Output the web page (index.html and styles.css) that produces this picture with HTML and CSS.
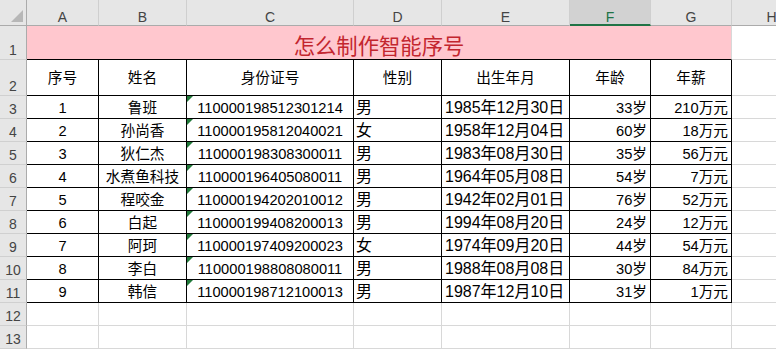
FILE: index.html
```html
<!DOCTYPE html>
<html lang="zh-CN">
<head>
<meta charset="utf-8">
<title>怎么制作智能序号</title>
<link rel="stylesheet" href="styles.css">
</head>
<body>
<div class="sheet">
  <div class="hd corner"></div>
  <div class="hd col">A</div>
  <div class="hd col">B</div>
  <div class="hd col">C</div>
  <div class="hd col">D</div>
  <div class="hd col">E</div>
  <div class="hd col sel">F</div>
  <div class="hd col">G</div>
  <div class="hd col">H</div>

  <div class="hd rn">1</div>
  <div class="cell title">怎么制作智能序号</div>
  <div class="cell"></div>

  <div class="hd rn">2</div>
  <div class="cell t th">序号</div>
  <div class="cell t th">姓名</div>
  <div class="cell t th">身份证号</div>
  <div class="cell t th">性别</div>
  <div class="cell t th">出生年月</div>
  <div class="cell t th">年龄</div>
  <div class="cell t th">年薪</div>
  <div class="cell"></div>

  <div class="hd rn">3</div>
  <div class="cell t ctr">1</div><div class="cell t ctr">鲁班</div><div class="cell t ctr id">110000198512301214</div><div class="cell t sex">男</div><div class="cell t date">1985年12月30日</div><div class="cell t num">33岁</div><div class="cell t num">210万元</div><div class="cell"></div>

  <div class="hd rn">4</div>
  <div class="cell t ctr">2</div><div class="cell t ctr">孙尚香</div><div class="cell t ctr id">110000195812040021</div><div class="cell t sex">女</div><div class="cell t date">1958年12月04日</div><div class="cell t num">60岁</div><div class="cell t num">18万元</div><div class="cell"></div>

  <div class="hd rn">5</div>
  <div class="cell t ctr">3</div><div class="cell t ctr">狄仁杰</div><div class="cell t ctr id">110000198308300011</div><div class="cell t sex">男</div><div class="cell t date">1983年08月30日</div><div class="cell t num">35岁</div><div class="cell t num">56万元</div><div class="cell"></div>

  <div class="hd rn">6</div>
  <div class="cell t ctr">4</div><div class="cell t ctr">水煮鱼科技</div><div class="cell t ctr id">110000196405080011</div><div class="cell t sex">男</div><div class="cell t date">1964年05月08日</div><div class="cell t num">54岁</div><div class="cell t num">7万元</div><div class="cell"></div>

  <div class="hd rn">7</div>
  <div class="cell t ctr">5</div><div class="cell t ctr">程咬金</div><div class="cell t ctr id">110000194202010012</div><div class="cell t sex">男</div><div class="cell t date">1942年02月01日</div><div class="cell t num">76岁</div><div class="cell t num">52万元</div><div class="cell"></div>

  <div class="hd rn">8</div>
  <div class="cell t ctr">6</div><div class="cell t ctr">白起</div><div class="cell t ctr id">110000199408200013</div><div class="cell t sex">男</div><div class="cell t date">1994年08月20日</div><div class="cell t num">24岁</div><div class="cell t num">12万元</div><div class="cell"></div>

  <div class="hd rn">9</div>
  <div class="cell t ctr">7</div><div class="cell t ctr">阿珂</div><div class="cell t ctr id">110000197409200023</div><div class="cell t sex">女</div><div class="cell t date">1974年09月20日</div><div class="cell t num">44岁</div><div class="cell t num">54万元</div><div class="cell"></div>

  <div class="hd rn">10</div>
  <div class="cell t ctr">8</div><div class="cell t ctr">李白</div><div class="cell t ctr id">110000198808080011</div><div class="cell t sex">男</div><div class="cell t date">1988年08月08日</div><div class="cell t num">30岁</div><div class="cell t num">84万元</div><div class="cell"></div>

  <div class="hd rn">11</div>
  <div class="cell t ctr">9</div><div class="cell t ctr">韩信</div><div class="cell t ctr id">110000198712100013</div><div class="cell t sex">男</div><div class="cell t date">1987年12月10日</div><div class="cell t num">31岁</div><div class="cell t num">1万元</div><div class="cell"></div>

  <div class="hd rn">12</div>
  <div class="cell"></div><div class="cell"></div><div class="cell"></div><div class="cell"></div><div class="cell"></div><div class="cell"></div><div class="cell"></div><div class="cell"></div>

  <div class="hd rn">13</div>
  <div class="cell"></div><div class="cell"></div><div class="cell"></div><div class="cell"></div><div class="cell"></div><div class="cell"></div><div class="cell"></div><div class="cell"></div>
</div>
</body>
</html>
```

FILE: styles.css
```css
html, body {
  margin: 0;
  padding: 0;
  background: #ffffff;
  overflow: hidden;
}

body {
  width: 776px;
  height: 349px;
  font-family: "Liberation Sans", "Noto Sans CJK SC", sans-serif;
  color: #000;
}

.sheet {
  display: grid;
  grid-template-columns: 27px 72px 88px 167px 88px 128px 81px 81px 80px;
  grid-template-rows: 26px 34px 36px repeat(11, 23px);
  width: 812px;
}

.sheet > div {
  box-sizing: border-box;
  min-width: 0;
  overflow: hidden;
  white-space: nowrap;
}

/* headers */
.hd {
  background: #e6e6e6;
  color: #444;
  font-size: 14px;
  line-height: 14px;
  display: flex;
  align-items: flex-end;
  justify-content: center;
}

.corner {
  position: relative;
  border-right: 1px solid #ababab;
  border-bottom: 1px solid #ababab;
}

.corner::after {
  content: "";
  position: absolute;
  right: 3px;
  bottom: 3px;
  width: 0;
  height: 0;
  border-bottom: 12px solid #b7b7b7;
  border-left: 12px solid transparent;
}

.col {
  border-right: 1px solid #cfcfcf;
  border-bottom: 1px solid #ababab;
  padding-bottom: 1px;
}

.col.sel {
  background: #d2d2d2;
  color: #217346;
  border-bottom: 2px solid #217346;
  padding-bottom: 0;
}

.rn {
  border-right: 1px solid #ababab;
  border-bottom: 1px solid #d0d0d0;
  padding-bottom: 2px;
}

/* cells */
.cell {
  border-right: 1px solid #d8d8d8;
  border-bottom: 1px solid #d8d8d8;
  font-size: 14.67px;
  line-height: 20px;
  display: flex;
  align-items: flex-end;
  padding: 0 3px;
}

.title {
  grid-column: 2 / span 7;
  background: #ffc7ce;
  border-bottom-color: #000;
  color: #c3262f;
  font-size: 21.33px;
  line-height: 24px;
  justify-content: center;
}

.t {
  border-right-color: #000;
  border-bottom-color: #000;
}

.th {
  align-items: center;
  justify-content: center;
}

.ctr {
  justify-content: center;
}

.id {
  position: relative;
}

.id::before {
  content: "";
  position: absolute;
  left: 0;
  top: 0;
  width: 0;
  height: 0;
  border-top: 6px solid #217a3a;
  border-right: 6px solid transparent;
}

.sex {
  font-size: 16px;
  padding-left: 2px;
}

.date {
  font-size: 16px;
  padding-left: 3px;
}

.num {
  justify-content: flex-end;
  padding-right: 3px;
}
```
